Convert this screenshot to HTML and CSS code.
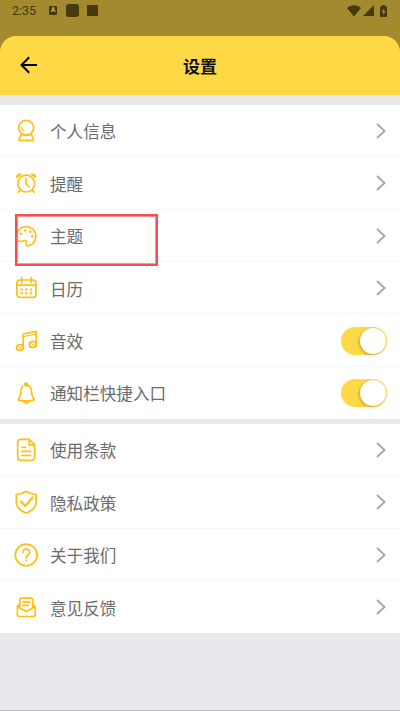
FILE: index.html
```html
<!DOCTYPE html>
<html lang="zh-CN">
<head>
<meta charset="utf-8">
<title>设置</title>
<link rel="stylesheet" href="styles.css">
</head>
<body>
<div class="screen">
  <div class="status">
    <span class="time">2:35</span>
    <span class="badge-a">A</span>
    <span class="block-round"></span>
    <span class="block"></span>
    <span class="spacer"></span>
    <svg class="wifi" viewBox="0 0 14 12"><path d="M0 3C4-.6 10-.6 14 3L7 11.5z"/></svg>
    <svg class="signal" viewBox="0 0 11 11"><path d="M11 0v11H0z"/></svg>
    <svg class="battery" viewBox="0 0 7 12"><path fill-rule="evenodd" d="M2 0h3v1.3h1.4q.6 0 .6.7v9.3q0 .7-.6.7H.6q-.6 0-.6-.7V2q0-.7.6-.7H2zM4.2 3.2L1.6 7.2h1.5v3l2.4-4.1H4.2z"/></svg>
  </div>
  <header class="header">
    <svg class="back" viewBox="0 0 18 18"><path d="M17 9H2M9.2 1.3L1.5 9l7.7 7.7"/></svg>
    <h1>设置</h1>
  </header>

  <main>
    <section class="group">
      <div class="row">
        <svg class="icon" viewBox="0 0 24 24"><circle cx="12.2" cy="8.8" r="7.5"/><path d="M7.2 15.4L5 20.1q-.5 1.2.8 1.2h12.9q1.3 0 .8-1.2l-2.2-4.7M7.2 15.7h10"/><path class="fine" d="M7.4 8.3q.3 2.7 2.6 4"/></svg>
        <span class="label">个人信息</span>
        <svg class="chevron" viewBox="0 0 10 16"><path d="M1 1l7.6 7L1 15"/></svg>
      </div>
      <div class="row">
        <svg class="icon" viewBox="0 0 24 24"><circle cx="12.2" cy="12.6" r="8.4"/><path d="M12 7.7V13l3 3M5.8 19.4l-1.6 1.8M18.6 19.4l1.6 1.8"/><path class="solid" d="M2.2 7.6C.9 3.5 5.4 1 8.5 3.3zM22.2 7.6c1.3-4.1-3.2-6.6-6.3-4.3z"/></svg>
        <span class="label">提醒</span>
        <svg class="chevron" viewBox="0 0 10 16"><path d="M1 1l7.6 7L1 15"/></svg>
      </div>
      <div class="row marked">
        <svg class="icon" viewBox="0 0 24 24"><path d="M2.6 15.5C1.4 8 6.2 2.6 12.2 2.6c5.4 0 9.7 4.2 9.7 9.5 0 4.8-3 8.8-6.9 9.6-2.3.5-3.3-.8-2.8-2.7.6-2.2-.4-3.1-2.5-2.3-2.4.9-4.9 1-7.1-1.2z"/><g class="dots"><circle cx="7" cy="9.8" r="1.3"/><circle cx="11.2" cy="6.5" r="1.3"/><circle cx="16.3" cy="7.8" r="1.3"/><circle cx="18.2" cy="12.4" r="1.3"/></g></svg>
        <span class="label">主题</span>
        <svg class="chevron" viewBox="0 0 10 16"><path d="M1 1l7.6 7L1 15"/></svg>
      </div>
      <div class="row">
        <svg class="icon" viewBox="0 0 24 24"><rect x="2.9" y="4" width="19" height="17.4" rx="3"/><path d="M3 9.2h19M7.7 1.6v5M17 1.6v5"/><path class="dash" d="M6.5 13.6h2.4M11.1 13.6h2.4M15.7 13.6h2.4M6.5 17.2h2.4M11.1 17.2h2.4M15.7 17.2h2.4"/></svg>
        <span class="label">日历</span>
        <svg class="chevron" viewBox="0 0 10 16"><path d="M1 1l7.6 7L1 15"/></svg>
      </div>
      <div class="row">
        <svg class="icon" viewBox="0 0 24 24"><ellipse cx="5.9" cy="18.5" rx="3.4" ry="3"/><ellipse cx="18.8" cy="15.4" rx="3.4" ry="3"/><path d="M9.2 18.5V5l13-2.7v13.1"/><path class="fine" d="M9.5 7.6L22 5M4.4 17.6l2.8 1.7M17.3 14.5l2.8 1.7"/></svg>
        <span class="label">音效</span>
        <span class="switch"></span>
      </div>
      <div class="row">
        <svg class="icon" viewBox="0 0 24 24"><path d="M8.4 5C6.7 6.8 7 9.2 6.7 12c-.3 3-1.1 4.6-2.2 6-.5.8 0 1.3 1 1.4 4.4.7 9 .7 13.4 0 1-.1 1.5-.6 1-1.4-1.1-1.4-1.9-3-2.2-6-.4-4-.6-7.6-5.4-7.9"/><circle class="solid" cx="12" cy="3.4" r="2.2"/><path d="M9.8 20.6q2.4 2.6 4.8 0"/></svg>
        <span class="label">通知栏快捷入口</span>
        <span class="switch"></span>
      </div>
    </section>

    <section class="group">
      <div class="row">
        <svg class="icon" viewBox="0 0 24 24"><path d="M15.2 1.3H6.7q-3 0-3 3v15q0 3 3 3h11q3 0 3-3V6.8zM15.2 1.3v5.5h5.5M8 9.3h3.5M8 13.4h8.6M8 17.5h8.6"/></svg>
        <span class="label">使用条款</span>
        <svg class="chevron" viewBox="0 0 10 16"><path d="M1 1l7.6 7L1 15"/></svg>
      </div>
      <div class="row">
        <svg class="icon" viewBox="0 0 24 24"><path d="M12.2 1.2C9.3 3.4 6 4.3 2.3 4.6v6.8c0 5 3.7 9.4 9.9 11.6 6.2-2.2 9.9-6.6 9.9-11.6V4.6c-3.7-.3-7-1.2-9.9-3.4z"/><path class="check" d="M7 11.5l4.4 4.5 7-8.5"/></svg>
        <span class="label">隐私政策</span>
        <svg class="chevron" viewBox="0 0 10 16"><path d="M1 1l7.6 7L1 15"/></svg>
      </div>
      <div class="row">
        <svg class="icon" viewBox="0 0 24 24"><circle cx="12.2" cy="12" r="10.9"/><path d="M8.9 9.5c0-4.4 6.8-4.3 6.8-.2 0 2.5-3.4 2.7-3.4 5.5"/><circle class="solid" cx="12.3" cy="17.6" r="1.1"/></svg>
        <span class="label">关于我们</span>
        <svg class="chevron" viewBox="0 0 10 16"><path d="M1 1l7.6 7L1 15"/></svg>
      </div>
      <div class="row">
        <svg class="icon" viewBox="0 0 24 24"><path d="M5.9 9.2L3.4 11.5v8q0 2 2 2h13.8q2 0 2-2v-8l-2.5-2.3M3.4 11.7l8.9 4.7 8.9-4.7M5.9 12.5V5.1q0-2 2-2h8.8q2 0 2 2v7.4M9 7.2h6.8M9 10.4h5.2"/></svg>
        <span class="label">意见反馈</span>
        <svg class="chevron" viewBox="0 0 10 16"><path d="M1 1l7.6 7L1 15"/></svg>
      </div>
    </section>
  </main>
</div>
</body>
</html>
```

FILE: styles.css
```css
*, *::before, *::after { box-sizing: border-box; }
body {
  margin: 0;
  background: #a38a2e;
  font-family: "Noto Sans CJK SC", sans-serif;
}
.screen {
  height: 711px;
  display: flex;
  flex-direction: column;
  overflow: hidden;
}
.status {
  flex: none;
  height: 36px;
  padding: 0 13px 15px 12px;
  display: flex;
  align-items: center;
  color: #453910;
}
.status svg { fill: #453910; flex: none; }
.time {
  width: 37px;
  font: 12.5px/21px Roboto, sans-serif;
}
.badge-a {
  width: 8px;
  height: 9px;
  border-radius: 1px;
  background: #453910;
  color: #c2ae68;
  font: bold 7px/9px Roboto, sans-serif;
  text-align: center;
}
.block-round {
  width: 13px;
  height: 13px;
  margin-left: 9px;
  border-radius: 3px;
  background: #453910;
}
.block {
  width: 11px;
  height: 11px;
  margin-left: 8px;
  background: #453910;
}
.spacer { flex: 1; }
.wifi { width: 14px; height: 12px; }
.signal { width: 11px; height: 11px; margin: 0 0 0 2px; }
.battery { width: 7px; height: 12px; margin-left: 6px; }

.header {
  flex: none;
  height: 58.5px;
  padding: 0 20px;
  display: grid;
  grid-template-columns: 18px 1fr 18px;
  align-items: center;
  background: #ffd945;
  border-radius: 16px 16px 0 0;
}
.back {
  width: 18px;
  height: 18px;
  fill: none;
  stroke: #000;
  stroke-width: 2;
}
h1 {
  margin: 0;
  padding-top: 2px;
  font-size: 17px;
  line-height: 24px;
  font-weight: 700;
  text-align: center;
  color: #111;
}

main {
  flex: 1;
  padding-top: 10.3px;
  display: flex;
  flex-direction: column;
  gap: 4.6px;
  background: #e8e9ed;
  border-bottom: 1px solid #bdbec2;
}
.group { background: #fff; }
.row {
  position: relative;
  height: 52.4px;
  padding: 1px 14px 0;
  display: flex;
  align-items: center;
  border-bottom: 1px solid #f6f6f7;
}
.row:last-child { border-bottom-color: transparent; }
.icon {
  flex: none;
  width: 24px;
  height: 24px;
  fill: none;
  stroke: #ffbf13;
  stroke-width: 1.7;
  stroke-linecap: round;
  stroke-linejoin: round;
}
.solid, .dots { fill: #ffbf13; stroke: none; }
.dash { stroke-linecap: butt; stroke-width: 2; }
.fine { stroke-width: 1.1; }
.check { stroke-width: 2.4; }
.label {
  flex: 1;
  margin-left: 12px;
  padding-top: 1px;
  font-size: 16.6px;
  line-height: 24px;
  color: #6c6c6c;
}
.chevron {
  width: 10px;
  height: 16px;
  fill: none;
  stroke: #a6a6a6;
  stroke-width: 1.8;
}
.switch {
  width: 46px;
  height: 28px;
  margin-right: -1px;
  padding: 1px;
  display: flex;
  justify-content: flex-end;
  border-radius: 14px;
  background: #ffd945;
}
.switch::after {
  content: "";
  width: 26px;
  height: 26px;
  border-radius: 50%;
  background: #fff;
  box-shadow: -1px 1px 3px rgba(110, 80, 0, .4);
}
/* highlight frame drawn over the theme entry */
.marked::after {
  content: "";
  position: absolute;
  left: 15px;
  top: 4px;
  width: 143px;
  height: 52.4px;
  border: 2px solid #f94b50;
  box-shadow: inset 0 0 0 1px rgba(249, 75, 80, .6);
  z-index: 1;
}
```
